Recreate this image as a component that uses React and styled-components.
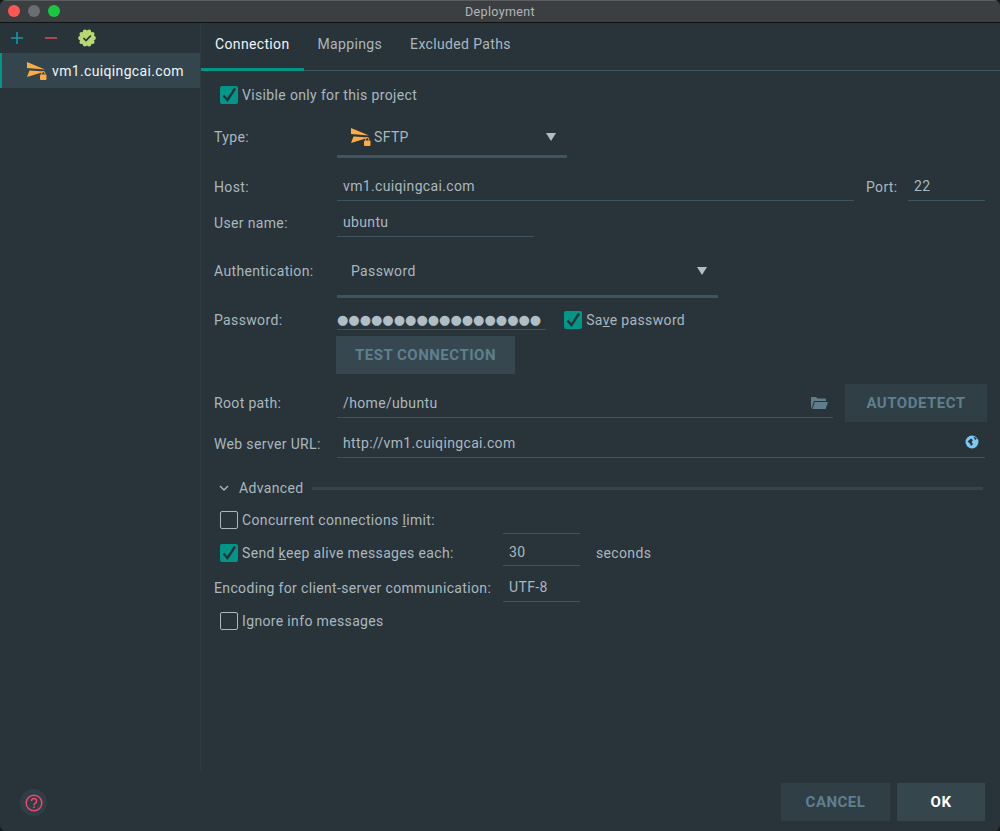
import React from 'react';
import styled, { createGlobalStyle } from 'styled-components';

const GlobalStyle = createGlobalStyle`
  html, body {
    margin: 0;
    padding: 0;
    background: #15191c;
  }
  * {
    box-sizing: border-box;
  }
`;

const SendIcon = () => (
  <IconBox width="22" height="20" viewBox="0 0 22 20">
    <path d="M0 1 L18 8.5 L0 7 Z" fill="#ffab40" />
    <path d="M0 16 L18 10.5 L2.5 9.5 Z" fill="#ffab40" />
    <rect x="13" y="13.5" width="6.5" height="5.5" rx="1" fill="#ffab40" />
    <path d="M14.6 13.5 v-1.2 a1.65 1.65 0 0 1 3.3 0 v1.2" fill="none" stroke="#ffab40" strokeWidth="1" />
  </IconBox>
);

const Checkbox = ({ checked }) => (
  <CheckBoxBox $checked={checked}>
    {checked && (
      <svg width="18" height="18" viewBox="0 0 18 18">
        <path d="M3.5 9.5 L7.5 14 L15 2.5" fill="none" stroke="#263238" strokeWidth="2.4" />
      </svg>
    )}
  </CheckBoxBox>
);

const badgeDots = [...Array(10)].map((_, i) => {
  const a = (i / 10) * Math.PI * 2;
  return [9 + Math.cos(a) * 6.6, 9 + Math.sin(a) * 6.6];
});

const App = () => {
  return (
    <Window>
      <GlobalStyle />
      <TitleBar>
        <Lights>
          <Light $color="#fc5753" />
          <Light $color="#6b6d6f" />
          <Light $color="#17c840" />
        </Lights>
        Deployment
      </TitleBar>
      <Main>
        <Sidebar>
          <SideTools>
            <svg width="14" height="14" viewBox="0 0 14 14">
              <path d="M7 1 V13 M1 7 H13" stroke="#0f9bab" strokeWidth="1.6" />
            </svg>
            <svg width="14" height="14" viewBox="0 0 14 14">
              <path d="M1 7 H13" stroke="#d9534f" strokeWidth="1.6" />
            </svg>
            <svg width="18" height="18" viewBox="0 0 18 18">
              <circle cx="9" cy="9" r="7" fill="#b9d873" />
              {badgeDots.map(([cx, cy], i) => (
                <circle key={i} cx={cx} cy={cy} r="2.2" fill="#b9d873" />
              ))}
              <path d="M5.4 9 L8 11.6 L12.8 6.6" fill="none" stroke="#2b3a35" strokeWidth="1.7" />
            </svg>
          </SideTools>
          <SideItem>
            <SendIcon />
            vm1.cuiqingcai.com
          </SideItem>
        </Sidebar>
        <Content>
          <Tabs>
            <Tab $active>Connection</Tab>
            <Tab>Mappings</Tab>
            <Tab>Excluded Paths</Tab>
          </Tabs>
          <Form>
            <CheckRow $top={14}>
              <Checkbox checked />
              Visible only for this project
            </CheckRow>
            <Row $top={13}>
              <SelectLabel>Type:</SelectLabel>
              <Select $width={230} $height={40}>
                <SendIcon />
                SFTP
                <Arrow />
              </Select>
            </Row>
            <Row $top={14}>
              <Label>Host:</Label>
              <Field $width={517}>vm1.cuiqingcai.com</Field>
              <PortLabel>Port:</PortLabel>
              <Field $width={77}>22</Field>
            </Row>
            <Row $top={7}>
              <Label>User name:</Label>
              <Field $width={197}>ubuntu</Field>
            </Row>
            <Row $top={9}>
              <SelectLabel>Authentication:</SelectLabel>
              <Select $width={381} $height={52}>
                Password
                <Arrow />
              </Select>
            </Row>
            <Row $top={11}>
              <Label>Password:</Label>
              <PasswordField>●●●●●●●●●●●●●●●●●●</PasswordField>
              <SaveCheck>
                <Checkbox checked />
                <span>Sa<u>v</u>e password</span>
              </SaveCheck>
            </Row>
            <TestButton>Test Connection</TestButton>
            <Row $top={10}>
              <Label>Root path:</Label>
              <Field $width={496}>
                /home/ubuntu
                <FieldIcon>
                  <svg width="18" height="14" viewBox="0 0 18 14">
                    <path d="M1 12 V2 a1 1 0 0 1 1-1 h4 l1.5 1.5 H15 a1 1 0 0 1 1 1 V5 H4 L1.6 12.5 Z" fill="#607d8b" />
                    <path d="M4.8 6 H18 L15.6 13 H2.4 Z" fill="#607d8b" />
                  </svg>
                </FieldIcon>
              </Field>
              <AutoButton>Autodetect</AutoButton>
            </Row>
            <Row $top={7}>
              <Label>Web server URL:</Label>
              <Field $width={648}>
                http://vm1.cuiqingcai.com
                <GlobeIcon>
                  <svg width="14" height="14" viewBox="0 0 14 14">
                    <circle cx="7" cy="7" r="6.5" fill="#7cc8f5" />
                    <path d="M2.5 6.5 L6 3.5 L8 5 L6.5 7 L8 9 L6 11 L5 8.5 Z M8.5 1.5 L12 3.5 L10 5 Z" fill="#263238" />
                  </svg>
                </GlobeIcon>
              </Field>
            </Row>
            <AdvancedRow>
              <svg width="10" height="6" viewBox="0 0 10 6">
                <path d="M1 1 L5 5 L9 1" fill="none" stroke="#b0bec5" strokeWidth="1.3" />
              </svg>
              Advanced
              <AdvancedLine />
            </AdvancedRow>
            <OptionRow $top={7}>
              <OptionCheck $width={283}>
                <Checkbox />
                <span>Concurrent connections <u>l</u>imit:</span>
              </OptionCheck>
              <Field $width={77} />
            </OptionRow>
            <OptionRow $top={5}>
              <OptionCheck $width={283}>
                <Checkbox checked />
                <span>Send <u>k</u>eep alive messages each:</span>
              </OptionCheck>
              <ShortField $width={77}>30</ShortField>
              <Seconds>seconds</Seconds>
            </OptionRow>
            <Row $top={7}>
              <EncodingLabel>Encoding for client-server communication:</EncodingLabel>
              <Field $width={77}>UTF-8</Field>
            </Row>
            <CheckRow $top={9}>
              <Checkbox />
              <span>I<u>g</u>nore info messages</span>
            </CheckRow>
          </Form>
        </Content>
      </Main>
      <Footer>
        <HelpButton>
          <svg width="18" height="18" viewBox="0 0 18 18">
            <circle cx="9" cy="9" r="7.8" fill="none" stroke="#f0476c" strokeWidth="1.5" />
            <path d="M6.4 7 a2.6 2.6 0 1 1 4 2.2 c-1 .6-1.4 1-1.4 2.1" fill="none" stroke="#f0476c" strokeWidth="1.5" />
            <rect x="8.2" y="12.4" width="1.6" height="1.6" fill="#f0476c" />
          </svg>
        </HelpButton>
        <FooterButtons>
          <CancelButton>Cancel</CancelButton>
          <OkButton>OK</OkButton>
        </FooterButtons>
      </Footer>
    </Window>
  );
};

const Window = styled.div`
  width: 1000px;
  height: 831px;
  display: flex;
  flex-direction: column;
  overflow: hidden;
  border-radius: 6px;
  background-color: #29333a;
  font-family: Roboto, sans-serif;
  font-size: 14px;
  letter-spacing: 0.35px;
  color: #a9b8bf;
`;

const TitleBar = styled.div`
  position: relative;
  height: 23px;
  flex: none;
  display: flex;
  align-items: center;
  justify-content: center;
  padding-bottom: 1px;
  background-color: #3c3f41;
  border-top: 1px solid #5a5c5e;
  border-bottom: 1px solid #101214;
  font-size: 12.5px;
  color: #b4b6b8;
`;

const Lights = styled.div`
  position: absolute;
  left: 8px;
  top: 4px;
  display: flex;
  gap: 8px;
`;

const Light = styled.div`
  width: 12px;
  height: 12px;
  border-radius: 50%;
  background-color: ${props => props.$color};
`;

const Main = styled.div`
  flex: 1;
  display: flex;
  min-height: 0;
`;

const Sidebar = styled.div`
  width: 201px;
  flex: none;
  border-right: 1px solid #2f3b43;
`;

const SideTools = styled.div`
  height: 30px;
  display: flex;
  align-items: center;
  padding-left: 10px;
  gap: 20px;
`;

const SideItem = styled.div`
  height: 35px;
  display: flex;
  align-items: center;
  padding-left: 25px;
  gap: 3px;
  background-color: #35454e;
  border-left: 2px solid #009688;
  color: #eef6f8;
`;

const IconBox = styled.svg`
  flex: none;
`;

const Content = styled.div`
  flex: 1;
  display: flex;
  flex-direction: column;
  min-width: 0;
`;

const Tabs = styled.div`
  height: 48px;
  display: flex;
  border-bottom: 1px solid #3d5560;
`;

const Tab = styled.div`
  height: 48px;
  padding: 0 14px 4px;
  display: flex;
  align-items: center;
  color: ${props => (props.$active ? '#eef6f8' : '#a9b8bf')};
  border-bottom: 3px solid ${props => (props.$active ? '#009688' : 'transparent')};
`;

const Form = styled.div`
  padding-left: 13px;
  padding-right: 13px;
`;

const Row = styled.div`
  display: flex;
  align-items: center;
  margin-top: ${props => props.$top}px;
`;

const OptionRow = styled(Row)`
  margin-left: 6px;
`;

const CheckRow = styled(Row)`
  height: 20px;
  margin-left: 6px;
  gap: 4px;
`;

const CheckBoxBox = styled.div`
  width: 18px;
  height: 18px;
  flex: none;
  border-radius: 2px;
  background-color: ${props => (props.$checked ? '#009688' : 'transparent')};
  border: ${props => (props.$checked ? 'none' : '1px solid #a9b8bf')};
  svg {
    display: block;
  }
`;

const Label = styled.div`
  width: 123px;
  flex: none;
`;

const SelectLabel = styled(Label)`
  padding-bottom: 3px;
`;

const PortLabel = styled.div`
  width: 42px;
  margin-left: 12px;
`;

const EncodingLabel = styled.div`
  width: 289px;
  flex: none;
`;

const Select = styled.div`
  width: ${props => props.$width}px;
  height: ${props => props.$height}px;
  display: flex;
  align-items: center;
  gap: 1px;
  padding: 0 11px 0 14px;
  border-bottom: 3px solid #3d5560;
`;

const Arrow = styled.div`
  width: 0;
  height: 0;
  margin-left: auto;
  border-left: 5.5px solid transparent;
  border-right: 5.5px solid transparent;
  border-top: 8px solid #b0bec5;
`;

const Field = styled.div`
  width: ${props => props.$width}px;
  height: 29px;
  flex: none;
  position: relative;
  display: flex;
  align-items: center;
  padding-left: 6px;
  border-bottom: 1px solid #3d5560;
`;

const ShortField = styled(Field)`
  height: 27px;
`;

const PasswordField = styled(Field)`
  height: 21px;
  padding: 0 5px 0 0;
  justify-content: flex-end;
  overflow: hidden;
  white-space: nowrap;
  font-family: "DejaVu Sans", sans-serif;
  font-size: 13px;
  letter-spacing: 0;
  color: #b0bec5;
`;

const SaveCheck = styled.div`
  display: flex;
  align-items: center;
  gap: 4px;
  margin-left: 18px;
`;

const OptionCheck = styled.div`
  width: ${props => props.$width}px;
  flex: none;
  display: flex;
  align-items: center;
  gap: 4px;
`;

const FieldIcon = styled.div`
  position: absolute;
  right: 5px;
  top: 7px;
  line-height: 0;
`;

const GlobeIcon = styled.div`
  position: absolute;
  right: 6px;
  top: 6px;
  line-height: 0;
`;

const Button = styled.div`
  height: 38px;
  display: flex;
  align-items: center;
  justify-content: center;
  font-size: 15px;
  font-weight: 700;
  letter-spacing: 0.5px;
  text-transform: uppercase;
`;

const TestButton = styled(Button)`
  width: 179px;
  margin: 6px 0 0 122px;
  background-color: #37474f;
  color: #5f7f8f;
`;

const AutoButton = styled(Button)`
  width: 142px;
  margin-left: 12px;
  background-color: #303e46;
  color: #5f7f8f;
`;

const AdvancedRow = styled.div`
  height: 20px;
  display: flex;
  align-items: center;
  gap: 10px;
  margin: 20px 4px 0 5px;
`;

const AdvancedLine = styled.div`
  flex: 1;
  height: 3px;
  margin-left: -2px;
  background-color: #34444d;
`;

const Seconds = styled.div`
  margin-left: 16px;
`;

const Footer = styled.div`
  height: 60px;
  flex: none;
  display: flex;
  justify-content: space-between;
  padding: 12px 15px 0 20px;
`;

const HelpButton = styled.div`
  width: 27px;
  height: 27px;
  margin-top: 6px;
  display: flex;
  align-items: center;
  justify-content: center;
  border-radius: 50%;
  background-color: #303e46;
`;

const FooterButtons = styled.div`
  display: flex;
  gap: 7px;
`;

const CancelButton = styled(Button)`
  width: 109px;
  background-color: #303e46;
  color: #5f7f8f;
`;

const OkButton = styled(Button)`
  width: 88px;
  background-color: #35474c;
  color: #ffffff;
`;

export default App;
